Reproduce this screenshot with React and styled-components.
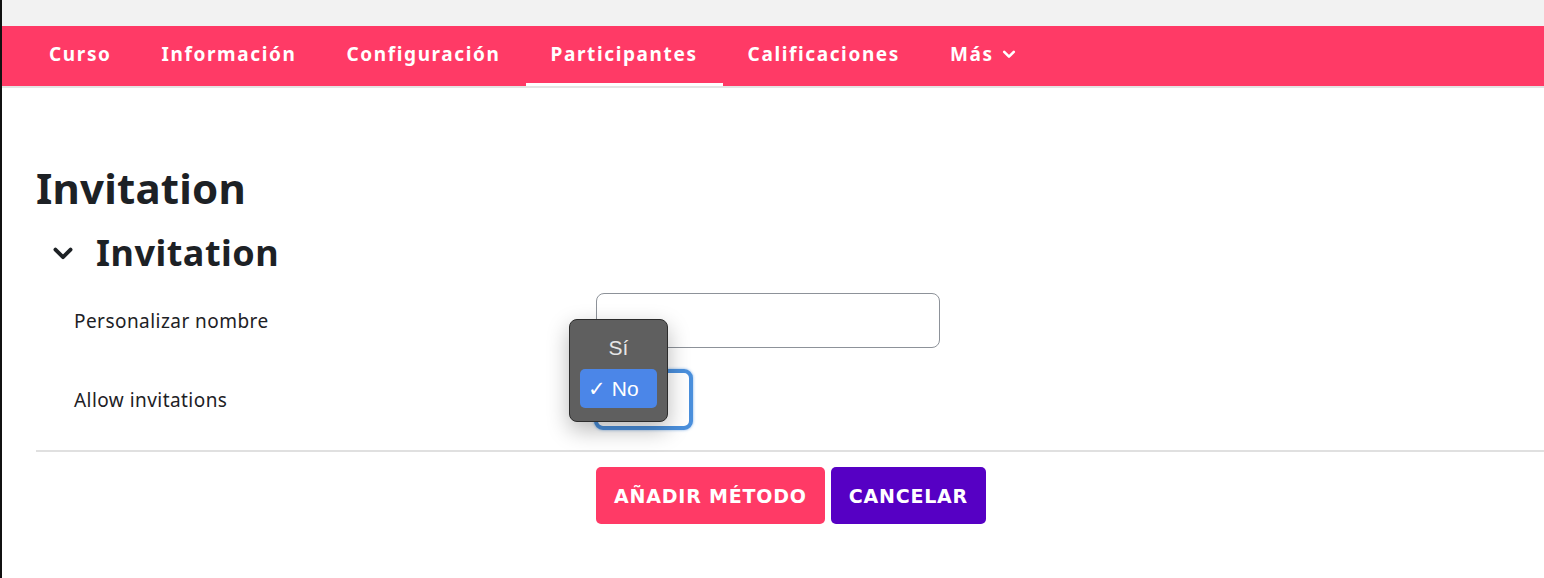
import React from "react";
import styled, { createGlobalStyle } from "styled-components";

const Global = createGlobalStyle`
  html, body { margin: 0; padding: 0; background: #fff; }
  body { font-family: "Noto Sans", "Open Sans", sans-serif; color: #1d2125; }
  * { box-sizing: border-box; }
`;

const Page = styled.div`
  border-left: 2px solid #111;
  min-height: 578px;
  width: 1544px;
  overflow: hidden;
`;

const TopStrip = styled.div`
  height: 26px;
  background: #f2f2f2;
`;

const Nav = styled.nav`
  height: 62px;
  background: #ff3a66;
  border-bottom: 2px solid #e4e4e4;
  display: flex;
  padding-left: 22px;
`;

const NavItem = styled.a`
  display: flex;
  align-items: center;
  gap: 8px;
  padding: 0 25px 2px;
  height: 100%;
  color: #fff;
  font-family: "Noto Sans", sans-serif;
  font-weight: 700;
  font-size: 19px;
  letter-spacing: 1.62px;
  text-decoration: none;
  border-bottom: 3px solid ${(p) => (p.$active ? "#fff" : "transparent")};
`;

const Main = styled.main`
  padding: 76px 0 0 34px;
`;

const Title = styled.h1`
  margin: 0;
  font-size: 42px;
  font-weight: 700;
  line-height: 48px;
  letter-spacing: 0.2px;
  color: #1d2125;
`;

const SectionHead = styled.div`
  display: flex;
  align-items: center;
  gap: 22px;
  margin: 20px 0 0 16px;
`;

const SectionTitle = styled.h2`
  margin: 0;
  font-size: 36px;
  font-weight: 700;
  line-height: 42px;
  letter-spacing: 0.5px;
  color: #1d2125;
`;

const Form = styled.div`
  display: flex;
  flex-direction: column;
  gap: 21px;
  margin-top: 19px;
`;

const Row = styled.div`
  display: grid;
  grid-template-columns: 560px auto;
  align-items: center;
  position: relative;
`;

const Label = styled.label`
  padding-left: 38px;
  font-size: 19px;
  letter-spacing: 0.45px;
  color: #1d2125;
`;

const TextInput = styled.div`
  width: 344px;
  height: 55px;
  border: 1.5px solid #8d9299;
  border-radius: 8px;
  background: #fff;
`;

const SelectBox = styled.div`
  width: 99px;
  height: 61px;
  margin-left: -2px;
  border: 4px solid #4a8fdc;
  border-radius: 9px;
  background: #fff;
  box-shadow: 0 0 3px rgba(74, 143, 220, 0.7);
`;

const Popup = styled.div`
  position: absolute;
  left: 533px;
  top: -50px;
  width: 99px;
  height: 103px;
  background: #5f5f5f;
  border: 1px solid #2c2c2c;
  border-radius: 8px;
  box-shadow: 0 8px 22px rgba(0, 0, 0, 0.28);
  padding: 8px 10px;
  display: flex;
  flex-direction: column;
  gap: 2px;
  font-family: "Liberation Sans", Arial, sans-serif;
  font-size: 21px;
  color: #e8e8e8;
`;

const Option = styled.div`
  height: 39px;
  display: flex;
  align-items: center;
  justify-content: ${(p) => (p.$selected ? "flex-start" : "center")};
  padding-left: ${(p) => (p.$selected ? "8px" : "0")};
  gap: 4px;
  border-radius: 5px;
  background: ${(p) => (p.$selected ? "#4b86e8" : "transparent")};
  color: ${(p) => (p.$selected ? "#fff" : "#e6e6e6")};
`;

const Divider = styled.hr`
  border: 0;
  border-top: 2px solid #e0e0e0;
  margin: 20px 0 0 0;
`;

const Buttons = styled.div`
  display: flex;
  gap: 6px;
  margin: 15px 0 0 560px;
`;

const Button = styled.button`
  height: 57px;
  padding: 0 18px;
  border: 0;
  border-radius: 5px;
  background: ${(p) => p.$bg};
  color: #fff;
  font-family: "DejaVu Sans", Verdana, sans-serif;
  font-weight: 700;
  font-size: 19px;
  letter-spacing: 0.8px;
`;

const Chevron = ({ size = 14, stroke = 3 }) => (
  <svg width={size} height={size} viewBox="0 0 16 16" fill="none">
    <path d="M2.5 5.5 L8 11 L13.5 5.5" stroke="currentColor" strokeWidth={stroke} strokeLinecap="round" strokeLinejoin="round" />
  </svg>
);

const SectionChevron = styled.span`
  display: flex;
  color: #1d2125;
`;

export default function App() {
  return (
    <>
      <Global />
      <Page>
        <TopStrip />
        <Nav>
          <NavItem>Curso</NavItem>
          <NavItem>Información</NavItem>
          <NavItem>Configuración</NavItem>
          <NavItem $active>Participantes</NavItem>
          <NavItem>Calificaciones</NavItem>
          <NavItem>
            Más <Chevron size={14} stroke={3} />
          </NavItem>
        </Nav>
        <Main>
          <Title>Invitation</Title>
          <SectionHead>
            <SectionChevron>
              <Chevron size={22} stroke={2.8} />
            </SectionChevron>
            <SectionTitle>Invitation</SectionTitle>
          </SectionHead>
          <Form>
            <Row>
              <Label>Personalizar nombre</Label>
              <TextInput />
            </Row>
            <Row>
              <Label>Allow invitations</Label>
              <SelectBox />
              <Popup>
                <Option>Sí</Option>
                <Option $selected>✓ No</Option>
              </Popup>
            </Row>
          </Form>
          <Divider />
          <Buttons>
            <Button $bg="#ff3a66">AÑADIR MÉTODO</Button>
            <Button $bg="#5600c4">CANCELAR</Button>
          </Buttons>
        </Main>
      </Page>
    </>
  );
}
